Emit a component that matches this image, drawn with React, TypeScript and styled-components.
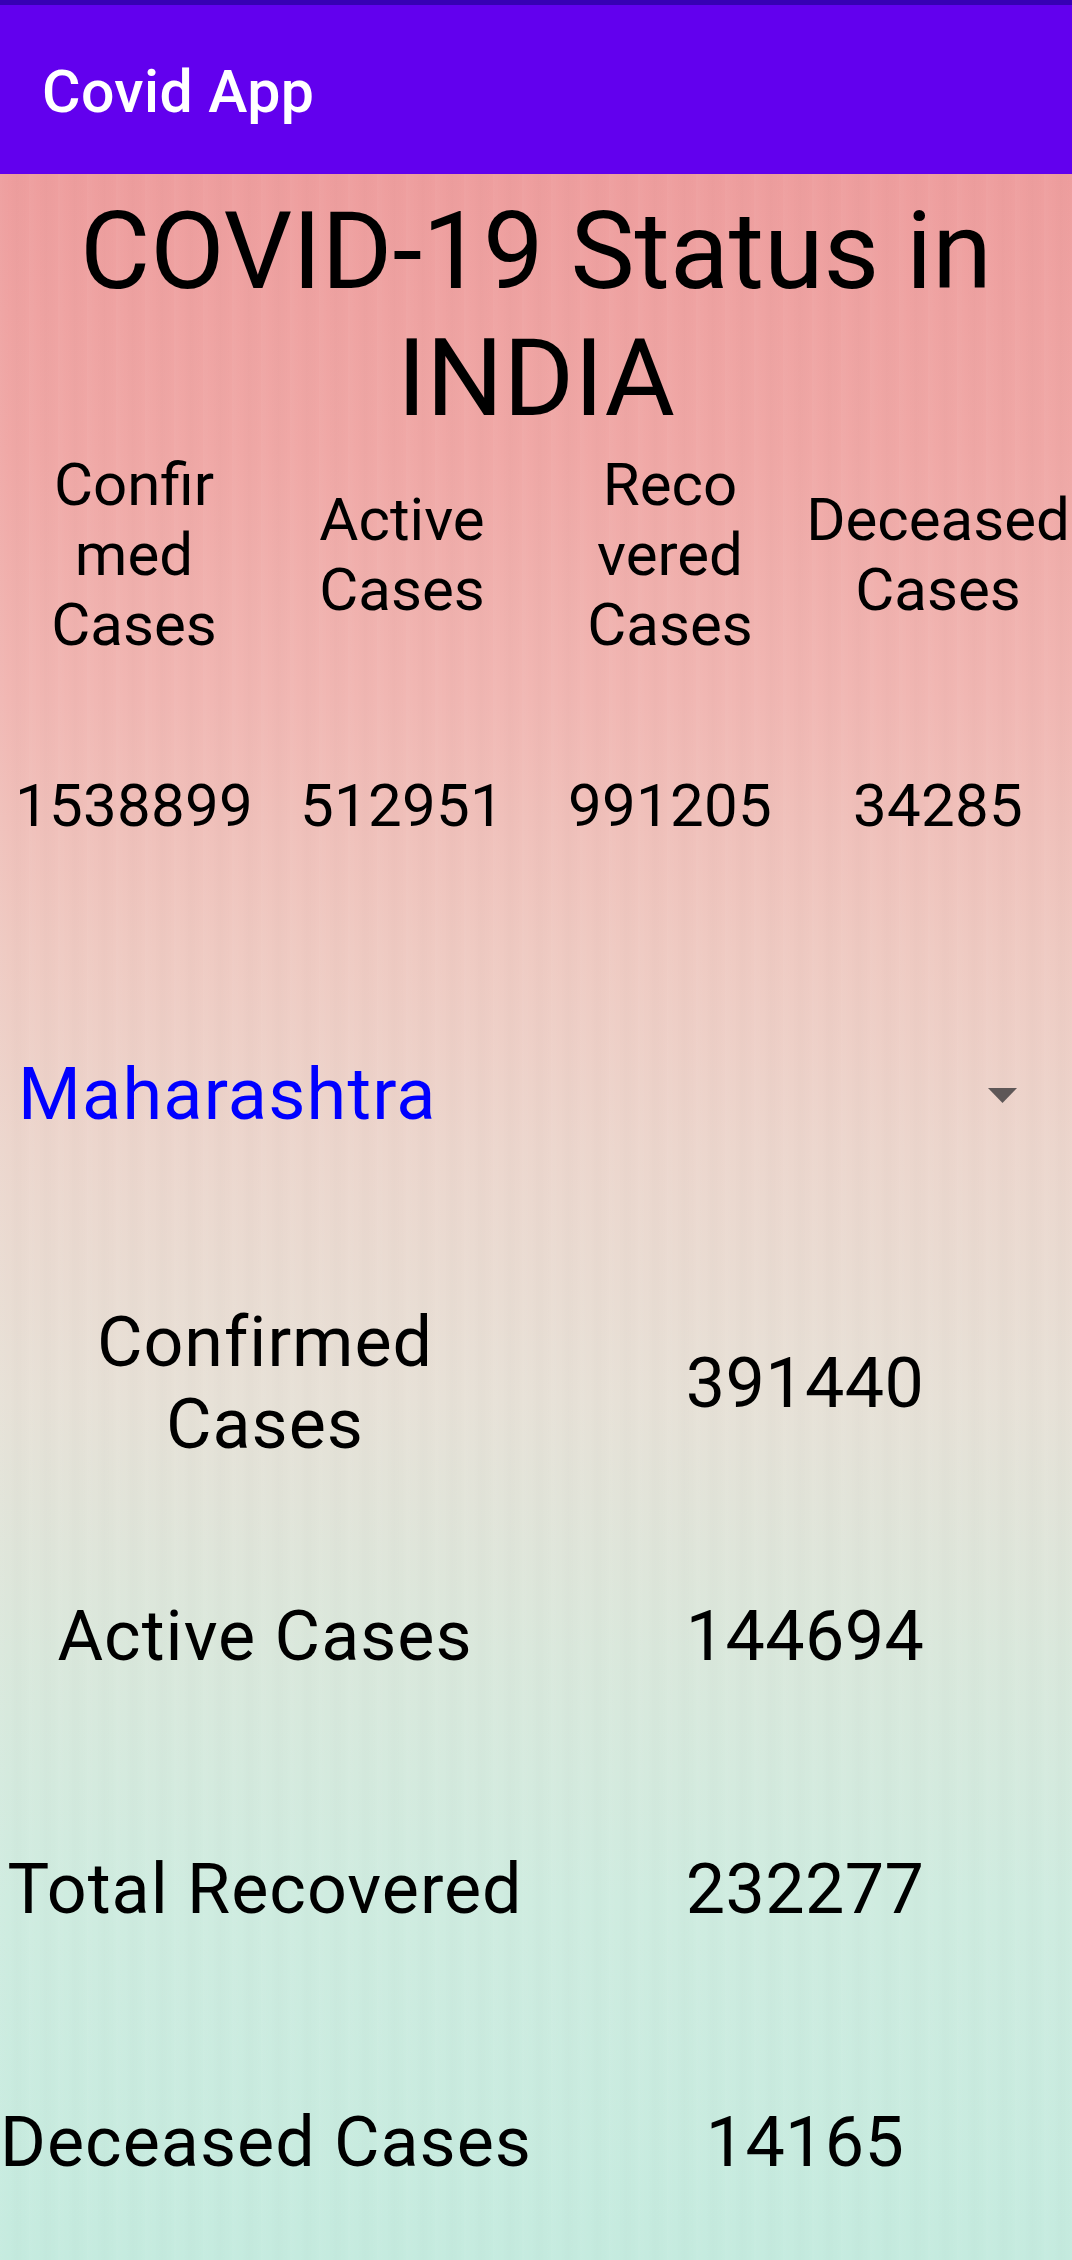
import React from "react";
import styled, { createGlobalStyle } from "styled-components";

const GlobalStyle = createGlobalStyle`
  html, body {
    margin: 0;
    padding: 0;
  }
  body {
    font-family: Roboto, "Noto Sans", "Liberation Sans", sans-serif;
    color: #000;
  }
`;

const Page = styled.div`
  min-height: 2260px;
  display: flex;
  flex-direction: column;
  background:
    repeating-linear-gradient(
      90deg,
      rgba(255, 255, 255, 0.035) 0px,
      rgba(255, 255, 255, 0) 9px,
      rgba(0, 0, 0, 0.01) 17px,
      rgba(255, 255, 255, 0) 29px
    ),
    linear-gradient(
      180deg,
      #ee9e9e 0px,
      #ee9e9e 174px,
      #f0a8a6 450px,
      #f1b7b3 700px,
      #efcac2 950px,
      #ecd6cd 1150px,
      #e7e1d7 1400px,
      #dae8dc 1650px,
      #cfece0 1900px,
      #c5ebdf 2260px
    );
`;

const StatusStrip = styled.div`
  height: 5px;
  background: #3700b3;
`;

const AppBar = styled.header`
  height: 169px;
  background: #6200ee;
  display: flex;
  align-items: center;
  padding: 4px 0 0 42px;
  box-sizing: border-box;
`;

const AppTitle = styled.h1`
  margin: 0;
  font-size: 59px;
  font-weight: 500;
  color: #ffffff;
  letter-spacing: 0.4px;
`;

const Main = styled.main`
  display: flex;
  flex-direction: column;
`;

const Title = styled.h2`
  margin: 14px 0 0;
  font-size: 108px;
  line-height: 127px;
  font-weight: 400;
  text-align: center;
`;

const NationalGrid = styled.div`
  margin-top: 8px;
  display: grid;
  grid-template-columns: repeat(4, 1fr);
  row-gap: 111px;
  align-items: center;
`;

const HeaderCell = styled.div`
  font-size: 60px;
  line-height: 70px;
  text-align: center;
`;

const ValueCell = styled.div`
  font-size: 60px;
  line-height: 70px;
  text-align: center;
  letter-spacing: 0.3px;
`;

const StateSelect = styled.div`
  margin-top: 212px;
  height: 84px;
  display: flex;
  align-items: center;
  justify-content: space-between;
  padding: 0 55px 0 18px;
`;

const StateName = styled.span`
  font-size: 72px;
  line-height: 84px;
  color: #0000ff;
  letter-spacing: 1.2px;
`;

const Caret = styled.svg`
  width: 29px;
  height: 15px;
  display: block;
`;

const StateTable = styled.div`
  margin-top: 119px;
  display: grid;
  grid-template-columns: 530px 1fr;
  grid-auto-rows: 253px;
  align-items: center;
`;

const StateLabel = styled.div`
  font-size: 70px;
  line-height: 82px;
  text-align: center;
  letter-spacing: 1px;
  white-space: nowrap;
`;

const StateValue = styled.div`
  font-size: 70px;
  line-height: 82px;
  text-align: center;
  padding-left: 8px;
  letter-spacing: 0.4px;
`;

const national = [
  { label: ["Confir", "med", "Cases"], value: "1538899" },
  { label: ["Active", "Cases"], value: "512951" },
  { label: ["Reco", "vered", "Cases"], value: "991205" },
  { label: ["Deceased", "Cases"], value: "34285" },
];

const stateRows = [
  { label: ["Confirmed", "Cases"], value: "391440" },
  { label: ["Active Cases"], value: "144694" },
  { label: ["Total Recovered"], value: "232277" },
  { label: ["Deceased Cases"], value: "14165" },
];

const Lines = ({ parts }: { parts: string[] }) => (
  <>
    {parts.map((p, i) => (
      <React.Fragment key={i}>
        {i > 0 && <br />}
        {p}
      </React.Fragment>
    ))}
  </>
);

export default function App() {
  return (
    <>
      <GlobalStyle />
      <Page>
        <StatusStrip />
        <AppBar>
          <AppTitle>Covid App</AppTitle>
        </AppBar>
        <Main>
          <Title>COVID-19 Status in INDIA</Title>
          <NationalGrid>
            {national.map((n, i) => (
              <HeaderCell key={`h${i}`}>
                <Lines parts={n.label} />
              </HeaderCell>
            ))}
            {national.map((n, i) => (
              <ValueCell key={`v${i}`}>{n.value}</ValueCell>
            ))}
          </NationalGrid>
          <StateSelect>
            <StateName>Maharashtra</StateName>
            <Caret viewBox="0 0 29 15">
              <polygon points="0,0 29,0 14.5,15" fill="#5e5757" />
            </Caret>
          </StateSelect>
          <StateTable>
            {stateRows.map((r, i) => (
              <React.Fragment key={i}>
                <StateLabel>
                  <Lines parts={r.label} />
                </StateLabel>
                <StateValue>{r.value}</StateValue>
              </React.Fragment>
            ))}
          </StateTable>
        </Main>
      </Page>
    </>
  );
}
